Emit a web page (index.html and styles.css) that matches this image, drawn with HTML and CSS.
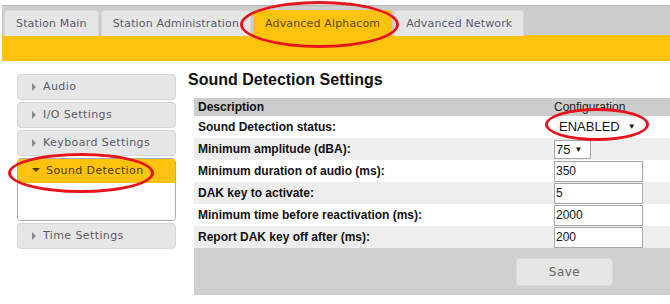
FILE: index.html
```html
<!DOCTYPE html>
<html lang="en">
<head>
  <meta charset="UTF-8">
  <title>Sound Detection Settings</title>
  <link rel="stylesheet" href="styles.css">
</head>
<body>
  <!-- Top tabs -->
  <div class="tabs">
    <div class="tab">Station Main</div>
    <div class="tab">Station Administration</div>
    <div class="tab active">Advanced Alphacom</div>
    <div class="tab">Advanced Network</div>
  </div>
  <div class="subbar"></div>

  <div class="main">
    <!-- Side menu -->
    <div class="sidemenu">
      <div class="item"><span class="arrow"></span>Audio</div>
      <div class="item"><span class="arrow"></span>I/O Settings</div>
      <div class="item"><span class="arrow"></span>Keyboard Settings</div>
      <div class="group">
        <div class="item open"><span class="arrow down"></span>Sound Detection</div>
        <div class="group-body"></div>
      </div>
      <div class="item"><span class="arrow"></span>Time Settings</div>
    </div>

    <!-- Settings -->
    <div class="content">
      <h1>Sound Detection Settings</h1>
      <table class="settings">
        <tr class="head">
          <th>Description</th>
          <td class="conf">Configuration</td>
        </tr>
        <tr>
          <th>Sound Detection status:</th>
          <td class="conf"><span class="select wide">ENABLED<span class="caret">&#9660;</span></span></td>
        </tr>
        <tr class="alt">
          <th>Minimum amplitude (dBA):</th>
          <td class="conf"><span class="select small">75<span class="caret">&#9660;</span></span></td>
        </tr>
        <tr>
          <th>Minimum duration of audio (ms):</th>
          <td class="conf"><span class="field">350</span></td>
        </tr>
        <tr class="alt">
          <th>DAK key to activate:</th>
          <td class="conf"><span class="field">5</span></td>
        </tr>
        <tr>
          <th>Minimum time before reactivation (ms):</th>
          <td class="conf"><span class="field">2000</span></td>
        </tr>
        <tr class="alt">
          <th>Report DAK key off after (ms):</th>
          <td class="conf"><span class="field">200</span></td>
        </tr>
        <tr class="foot">
          <td colspan="2"><button class="save">Save</button></td>
        </tr>
      </table>
    </div>
  </div>

  <!-- red annotation rings -->
  <div class="ring ring-tab"></div>
  <div class="ring ring-menu"></div>
  <div class="ring ring-select"></div>
</body>
</html>
```

FILE: styles.css
```css
/* General */
body {
  margin: 0;
  background: #fff;
  font-family: 'DejaVu Sans', Verdana, sans-serif;
  position: relative;
  width: 670px;
  height: 304px;
  overflow: hidden;
}

/* Tabs */
.tabs {
  margin: 5px 0 0 2px;
  background: #cdcdcd;
  border-top: 1px solid #b8b8b8;
  padding: 4px 0 0 2px;
  display: flex;
  gap: 2px;
  height: 25px;
}

.tab {
  background: #e6e6e6;
  border: 1px solid #d8d8d8;
  border-bottom: none;
  border-radius: 4px 4px 0 0;
  padding: 0 11px;
  height: 25px;
  line-height: 26px;
  font-size: 11px;
  letter-spacing: 0.15px;
  color: #5a5a6a;
}

.tab.active {
  background: #ffc20e;
  border-color: #ffc20e;
  color: #5a4a10;
  padding: 0 11px;
}

.subbar {
  margin-left: 2px;
  height: 26px;
  background: #ffc20e;
}

/* Main area */
.main {
  display: flex;
  padding-top: 9px;
}

.sidemenu {
  margin: 4px 0 0 17px;
  width: 159px;
  display: flex;
  flex-direction: column;
  gap: 2px;
}

.item {
  height: 24px;
  line-height: 24px;
  background: #e6e6e6;
  border: 1px solid #d6d6d6;
  border-radius: 4px;
  font-size: 11px;
  letter-spacing: 0.4px;
  color: #5a5a6a;
  padding-left: 14px;
}

.arrow {
  display: inline-block;
  width: 0;
  height: 0;
  border-top: 4px solid transparent;
  border-bottom: 4px solid transparent;
  border-left: 4px solid #8a8a8a;
  margin-right: 7px;
  vertical-align: -1px;
}

.arrow.down {
  border-left: 4px solid transparent;
  border-right: 4px solid transparent;
  border-top: 4px solid #4a3a10;
  border-bottom: none;
  margin-right: 6px;
  vertical-align: 2px;
}

.group {
  border: 1px solid #aaa;
  border-radius: 4px;
  overflow: hidden;
}

.item.open {
  background: #ffc20e;
  border: none;
  border-radius: 0;
  color: #4a3a10;
  height: 24px;
}

.group-body {
  height: 37px;
  background: #fff;
}

/* Content */
.content {
  flex: 1;
  margin-left: 11px;
}

.content h1 {
  font-family: 'Liberation Sans', Arial, sans-serif;
  font-size: 16px;
  margin: 0 0 8px 1px;
  color: #111;
  line-height: 20px;
}

.settings {
  margin-left: 7px;
  width: calc(100% - 7px);
  border-collapse: collapse;
  font-family: 'Liberation Sans', Arial, sans-serif;
  font-size: 12px;
}

.settings th {
  text-align: left;
  font-weight: bold;
  color: #111;
  padding: 0 0 0 4px;
  height: 22px;
}

.settings tr.head th,
.settings tr.head td {
  background: #cccccc;
  height: 18px;
  line-height: 14px;
}

.settings tr.head td.conf {
  color: #222;
  vertical-align: top;
  padding-top: 2px;
  height: 16px;
}

.settings tr.alt th,
.settings tr.alt td {
  background: #eeeeee;
}

.conf {
  width: 116px;
  padding: 0;
}

.field {
  display: block;
  box-sizing: border-box;
  width: 89px;
  height: 21px;
  line-height: 19px;
  border: 1px solid #a8a8a8;
  background: #fff;
  padding-left: 1px;
  font-size: 12px;
  color: #111;
}

.select {
  display: inline-block;
  box-sizing: border-box;
  background: #fff;
  color: #111;
}

.select.wide {
  width: 88px;
  height: 20px;
  line-height: 20px;
  font-size: 13px;
  padding-left: 5px;
}

.select.small {
  width: 37px;
  height: 19px;
  line-height: 17px;
  border: 1px solid #a8a8a8;
  padding-left: 1px;
  font-size: 13px;
}

.caret {
  font-size: 8px;
  margin-left: 8px;
  vertical-align: 2px;
}

.select.small .caret {
  margin-left: 4px;
}

.settings tr.foot td {
  background: #d0d0d0;
  height: 47px;
  padding: 0;
}

.save {
  display: block;
  margin-left: 322px;
  width: 97px;
  height: 28px;
  background: #e6e6e6;
  border: 1px solid #dadada;
  border-radius: 4px;
  font-family: 'DejaVu Sans', Verdana, sans-serif;
  font-size: 12px;
  letter-spacing: 0.5px;
  color: #666;
}

/* Annotation rings */
.ring {
  position: absolute;
  border: 3px solid #e8141c;
  border-radius: 50%;
  box-sizing: border-box;
}

.ring-tab {
  left: 240px;
  top: 1px;
  width: 159px;
  height: 47px;
}

.ring-menu {
  left: 8px;
  top: 153px;
  width: 146px;
  height: 40px;
}

.ring-select {
  left: 545px;
  top: 108px;
  width: 104px;
  height: 33px;
}
```
